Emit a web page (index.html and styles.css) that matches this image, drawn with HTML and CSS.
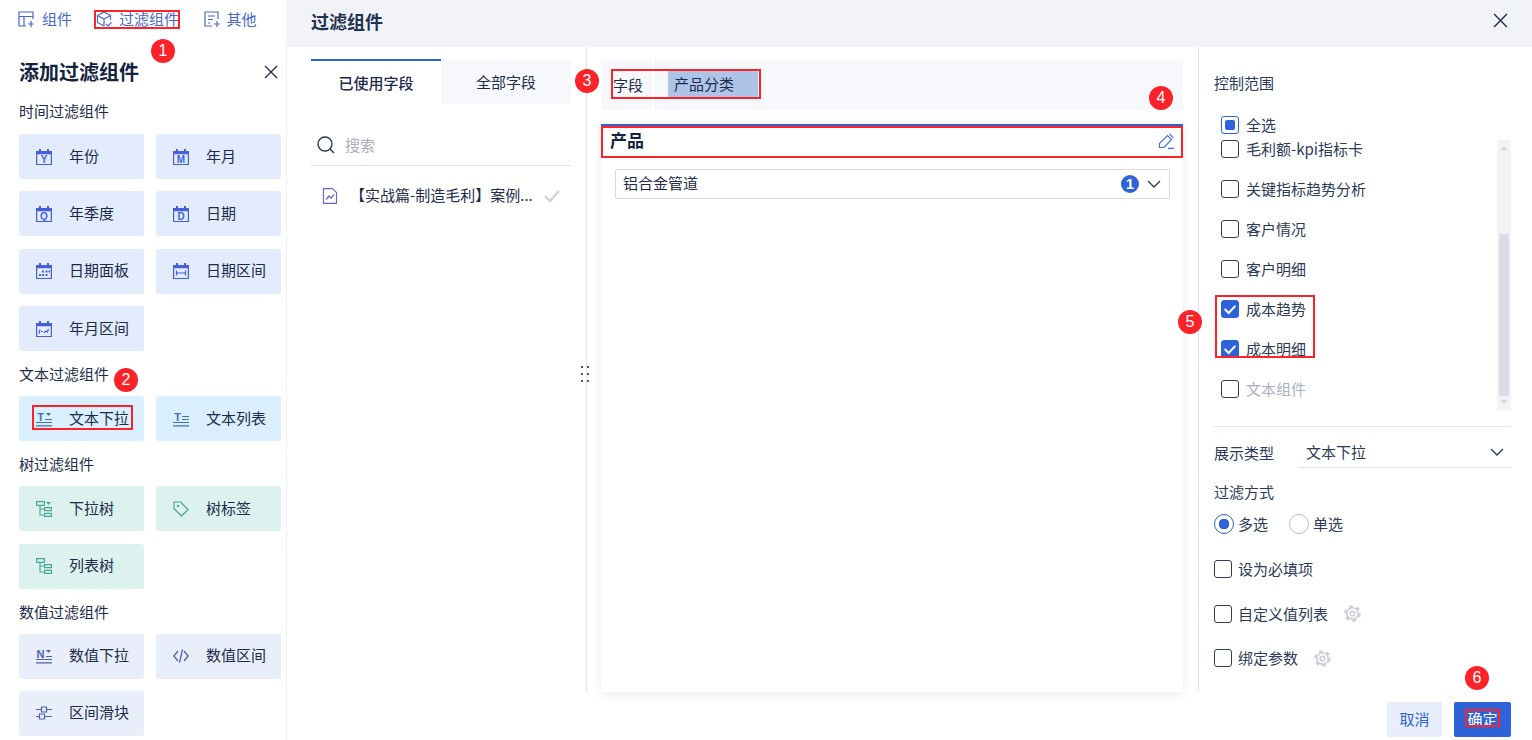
FILE: index.html
```html
<!DOCTYPE html>
<html lang="zh-CN">
<head>
  <meta charset="UTF-8" />
  <title>过滤组件</title>
  <link rel="stylesheet" href="styles.css">
</head>
<body>
  <svg class="defs" width="0" height="0">
    <symbol id="cal" viewBox="0 0 16 16">
      <path d="M.6 2.500h14.800v13H.6z" fill="none" stroke="currentColor" stroke-width="1.200"/>
      <path d="M0 2h16v3.200H0zM3 0h2v3H3zM11 0h2v3h-2z" fill="currentColor"/>
    </symbol>
    <symbol id="gear" viewBox="0 0 16 16">
      <circle cx="8" cy="8" r="5.400" fill="none" stroke="currentColor" stroke-width="1.400"/>
      <circle cx="8" cy="8" r="6.800" fill="none" stroke="currentColor" stroke-width="2" stroke-dasharray="3.500 3.620"/>
      <circle cx="8" cy="8" r="2.200" fill="none" stroke="currentColor" stroke-width="1.400"/>
    </symbol>
    <symbol id="tree" viewBox="0 0 16 16">
      <path d="M.6.600h7.800v3.800H.6zM8.600 6.600h6.800v3H8.600zM8.600 12.400h6.800v3H8.600zM4 4.400V14h4.600M4 8h4.600" fill="none" stroke="currentColor" stroke-width="1.200"/>
    </symbol>
    <symbol id="chev" viewBox="0 0 14 14">
      <path d="M1 4l6 6 6-6" fill="none" stroke="currentColor" stroke-width="1.300"/>
    </symbol>
    <symbol id="tick" viewBox="0 0 18 18">
      <path d="M3 9l4.500 4.500L15 5.500" fill="none" stroke="#fff" stroke-width="2.200"/>
    </symbol>
  </svg>

  <div class="app">
    <!-- 左侧 添加组件 -->
    <aside class="sidebar">
      <nav class="top-tabs">
        <a class="top-tab">
          <svg class="tab-icon" viewBox="0 0 16 16"><path d="M15 8V1H1v14h7M1 5.500h14M6 5.500V15M10 13h6M13 10v6" fill="none" stroke="currentColor" stroke-width="1.200"/></svg>
          组件
        </a>
        <a class="top-tab">
          <svg class="tab-icon" viewBox="0 0 16 16"><path d="M14.500 9V4.500L8 1 1.500 4.500v7L8 15M1.500 4.500L8 8l6.500-3.500M8 8v7M10 13l2 2 3.500-3.500" fill="none" stroke="currentColor" stroke-width="1.200"/></svg>
          过滤组件
        </a>
        <a class="top-tab">
          <svg class="tab-icon" viewBox="0 0 16 16"><path d="M14 8V1H1v14h7M4 5h7M4 8.500h5M4 12h2M10 13h6M13 10v6" fill="none" stroke="currentColor" stroke-width="1.200"/></svg>
          其他
        </a>
      </nav>
      <div class="side-title">
        <h2>添加过滤组件</h2>
        <svg class="close-icon" viewBox="0 0 14 14"><path d="M1 1l12 12M13 1L1 13" stroke="currentColor" stroke-width="1.300"/></svg>
      </div>

      <section class="group">
        <h3>时间过滤组件</h3>
        <div class="btn-grid time">
          <div class="comp"><svg class="ci" viewBox="0 0 16 16"><use href="#cal"/><text x="8" y="14" class="ci-letter">Y</text></svg><span>年份</span></div>
          <div class="comp"><svg class="ci" viewBox="0 0 16 16"><use href="#cal"/><text x="8" y="14" class="ci-letter">M</text></svg><span>年月</span></div>
          <div class="comp"><svg class="ci" viewBox="0 0 16 16"><use href="#cal"/><text x="8" y="14" class="ci-letter">Q</text></svg><span>年季度</span></div>
          <div class="comp"><svg class="ci" viewBox="0 0 16 16"><use href="#cal"/><text x="8" y="14" class="ci-letter">D</text></svg><span>日期</span></div>
          <div class="comp"><svg class="ci" viewBox="0 0 16 16"><use href="#cal"/><path d="M6 7.500h2V9.500H6zM9.500 7.500h2V9.500h-2zM12.500 7.500h1.500V9.500H12.500zM3 11h2v2H3zM6 11h2v2H6zM9.500 11h2v2h-2z" fill="currentColor"/></svg><span>日期面板</span></div>
          <div class="comp"><svg class="ci" viewBox="0 0 16 16"><use href="#cal"/><path d="M3.500 7.500v5M12.500 7.500v5M3.500 10h9" fill="none" stroke="currentColor" stroke-width="1.200"/></svg><span>日期区间</span></div>
          <div class="comp"><svg class="ci" viewBox="0 0 16 16"><use href="#cal"/><path d="M3 12.500l1-4M5 10.500h2M8 12l2-2 1.500 1 1-3" fill="none" stroke="currentColor" stroke-width="1.200"/></svg><span>年月区间</span></div>
        </div>
      </section>

      <section class="group">
        <h3>文本过滤组件</h3>
        <div class="btn-grid text">
          <div class="comp"><svg class="ci" viewBox="0 0 16 16"><text x="4.500" y="10" class="ci-letter big">T</text><path d="M10 2h5l-2.500 3z" fill="currentColor"/><path d="M0 11.500h16M0 14.800h16M9 8.500h7" stroke="currentColor" stroke-width="1.200" fill="none"/></svg><span>文本下拉</span></div>
          <div class="comp"><svg class="ci" viewBox="0 0 16 16"><text x="4.500" y="10" class="ci-letter big">T</text><path d="M0 11.500h16M0 14.800h16M9 5.500h7M9 8.500h7" stroke="currentColor" stroke-width="1.200" fill="none"/></svg><span>文本列表</span></div>
        </div>
      </section>

      <section class="group">
        <h3>树过滤组件</h3>
        <div class="btn-grid tree">
          <div class="comp"><svg class="ci" viewBox="0 0 16 16"><use href="#tree"/><path d="M10 1h5l-2.500 3z" fill="currentColor"/></svg><span>下拉树</span></div>
          <div class="comp"><svg class="ci" viewBox="0 0 16 16"><path d="M1 1h6.500L15 8.500 8.500 15 1 7.500z" fill="none" stroke="currentColor" stroke-width="1.200" stroke-linejoin="round"/><circle cx="5" cy="5" r="1.200" fill="currentColor"/></svg><span>树标签</span></div>
          <div class="comp"><svg class="ci" viewBox="0 0 16 16"><use href="#tree"/></svg><span>列表树</span></div>
        </div>
      </section>

      <section class="group">
        <h3>数值过滤组件</h3>
        <div class="btn-grid num">
          <div class="comp"><svg class="ci" viewBox="0 0 16 16"><text x="4.500" y="10" class="ci-letter big">N</text><path d="M10 2h5l-2.500 3z" fill="currentColor"/><path d="M0 11.500h16M0 14.800h16M10 8.500h6" stroke="currentColor" stroke-width="1.200" fill="none"/></svg><span>数值下拉</span></div>
          <div class="comp"><svg class="ci" viewBox="0 0 16 16"><path d="M5 3L.8 8 5 13M11 3l4.200 5L11 13M9.500 1.500l-3 13" fill="none" stroke="currentColor" stroke-width="1.300"/></svg><span>数值区间</span></div>
          <div class="comp"><svg class="ci" viewBox="0 0 16 16"><path d="M0 4.500h5M11 4.500h5M0 11.500h3M9 11.500h7M5.500 2h5v5h-5zM3.500 9h5v5h-5z" fill="none" stroke="currentColor" stroke-width="1.200"/></svg><span>区间滑块</span></div>
        </div>
      </section>
    </aside>

    <!-- 右侧 过滤组件设置 -->
    <main class="panel">
      <header class="panel-head">
        <h1>过滤组件</h1>
        <svg class="close-icon" viewBox="0 0 14 14"><path d="M1 1l12 12M13 1L1 13" stroke="currentColor" stroke-width="1.300"/></svg>
      </header>

      <div class="panel-body">
        <div class="col-fields">
          <div class="field-tabs">
            <div class="field-tab active">已使用字段</div>
            <div class="field-tab">全部字段</div>
          </div>
          <div class="search">
            <svg class="search-icon" viewBox="0 0 18 18"><circle cx="8" cy="8" r="7" fill="none" stroke="currentColor" stroke-width="1.400"/><path d="M13 13l4 4" stroke="currentColor" stroke-width="1.400"/></svg>
            <span>搜索</span>
          </div>
          <div class="ds-item">
            <svg class="ds-icon" viewBox="0 0 16 16"><path d="M1.500.600h9l4 4v10.800h-13zM4 11.500l3-3.500 2 2 3-3.500" fill="none" stroke="currentColor" stroke-width="1.200"/></svg>
            <span class="ds-name">【实战篇-制造毛利】案例...</span>
            <svg class="ds-check" viewBox="0 0 16 14"><path d="M1 7l5 5 9-10" fill="none" stroke="currentColor" stroke-width="2.400"/></svg>
          </div>
        </div>

        <svg class="drag-dots" viewBox="0 0 10 18"><path d="M1 1h2v2H1zM1 8h2v2H1zM1 15h2v2H1zM7 1h2v2H7zM7 8h2v2H7zM7 15h2v2H7z" fill="#4a5568"/></svg>

        <div class="col-main">
          <div class="field-bar">
            <span class="field-label">字段</span>
            <span class="field-pill">产品分类</span>
          </div>
          <div class="preview-card">
            <div class="preview-head">
              <strong>产品</strong>
              <svg class="edit-icon" viewBox="0 0 18 16"><path d="M1.500 14.500v-4l8-8 4 4-7.500 8zM11.500.8l4 4M10 15.400h6" fill="none" stroke="currentColor" stroke-width="1.200"/></svg>
            </div>
            <div class="preview-select">
              <span>铝合金管道</span>
              <span class="count">1</span>
              <svg class="chev" viewBox="0 0 14 14"><use href="#chev"/></svg>
            </div>
          </div>
        </div>

        <div class="col-props">
          <div class="prop-label">控制范围</div>
          <label class="check-row all"><i class="box part"></i>全选</label>
          <div class="scope">
            <div class="scope-list">
              <label class="check-row"><i class="box"></i>毛利额-kpi指标卡</label>
              <label class="check-row"><i class="box"></i>关键指标趋势分析</label>
              <label class="check-row"><i class="box"></i>客户情况</label>
              <label class="check-row"><i class="box"></i>客户明细</label>
              <label class="check-row"><i class="box on"><svg viewBox="0 0 18 18"><use href="#tick"/></svg></i>成本趋势</label>
              <label class="check-row"><i class="box on"><svg viewBox="0 0 18 18"><use href="#tick"/></svg></i>成本明细</label>
              <label class="check-row muted"><i class="box"></i>文本组件</label>
            </div>
            <div class="scrollbar"><i class="thumb"></i></div>
          </div>
          <div class="type-row">
            <span>展示类型</span>
            <div class="type-select">
              文本下拉
              <svg class="chev" viewBox="0 0 14 14"><use href="#chev"/></svg>
            </div>
          </div>
          <div class="prop-label filter-mode">过滤方式</div>
          <div class="radios">
            <label class="radio"><i class="dot on"></i>多选</label>
            <label class="radio"><i class="dot"></i>单选</label>
          </div>
          <label class="opt"><i class="box"></i>设为必填项</label>
          <label class="opt"><i class="box"></i>自定义值列表<svg class="gear" viewBox="0 0 16 16"><use href="#gear"/></svg></label>
          <label class="opt"><i class="box"></i>绑定参数<svg class="gear" viewBox="0 0 16 16"><use href="#gear"/></svg></label>
        </div>
      </div>

      <footer class="panel-foot">
        <button class="btn ghost">取消</button>
        <button class="btn primary">确定</button>
      </footer>
    </main>

    <!-- 标注 -->
    <div class="mark m1"></div>
    <div class="mark m2"></div>
    <div class="mark m3"></div>
    <div class="mark m4"></div>
    <div class="mark m5"></div>
    <div class="mark m6"></div>
    <span class="badge b1">1</span>
    <span class="badge b2">2</span>
    <span class="badge b3">3</span>
    <span class="badge b4">4</span>
    <span class="badge b5">5</span>
    <span class="badge b6">6</span>
  </div>
</body>
</html>
```
FILE: styles.css
```css
* {
  box-sizing: border-box;
  margin: 0;
  padding: 0;
}

body {
  font-family: "Noto Sans CJK SC", "Noto Sans", sans-serif;
  font-size: 15px;
  line-height: 20px;
  color: #1c2b4a;
  background: #fff;
  overflow: hidden;
}

i {
  font-style: normal;
}

.defs {
  position: absolute;
}

.app {
  position: relative;
  display: flex;
  width: 1532px;
  height: 740px;
  overflow: hidden;
}

/* 左侧 */
.sidebar {
  width: 287px;
  flex: none;
  padding-left: 19px;
  border-right: 1px solid #eef0f5;
}

.top-tabs {
  display: flex;
  height: 38px;
  align-items: center;
  margin-left: -1px;
}

.top-tab {
  display: flex;
  align-items: center;
  gap: 7px;
  margin-right: 24.500px;
  color: #4a66c8;
}

.top-tab:first-child {
  gap: 8px;
  margin-right: 24px;
}

.tab-icon {
  width: 16px;
  height: 16px;
}

.side-title {
  display: flex;
  align-items: center;
  justify-content: space-between;
  height: 64px;
  padding: 4px 8px 0 0;
}

.side-title h2 {
  font-size: 20px;
  font-weight: 700;
  color: #14233f;
}

.close-icon {
  width: 14px;
  height: 14px;
  color: #1c2b4a;
}

.group {
  margin-bottom: 13px;
}

.group h3 {
  font-size: 15px;
  font-weight: 400;
  line-height: 18px;
  margin-bottom: 14px;
}

.group + .group h3 {
  line-height: 20px;
  margin-bottom: 12px;
}

.btn-grid {
  display: grid;
  grid-template-columns: 125px 125px;
  column-gap: 12px;
  row-gap: 12.400px;
}

.comp {
  display: flex;
  align-items: center;
  height: 45px;
  padding-left: 17px;
  border-radius: 3px;
}

.comp span {
  margin-left: 17px;
  padding-bottom: 2px;
}

.ci {
  width: 16px;
  height: 16px;
  flex: none;
}

.ci-letter {
  font-family: "Liberation Sans", sans-serif;
  font-size: 10px;
  font-weight: 700;
  text-anchor: middle;
  fill: currentColor;
}

.ci-letter.big {
  font-size: 11px;
}

.time .comp {
  background: #e3ecfd;
}

.time .ci {
  color: #4560d8;
}

.text .comp {
  background: #daf0fe;
}

.text .ci {
  color: #3f6fb5;
}

.tree .comp {
  background: #dcf2ee;
}

.tree .ci {
  color: #4aa69a;
}

.num .comp {
  background: #e9eefb;
}

.num .ci {
  color: #4d62ad;
}

/* 右侧 */
.panel {
  flex: 1;
  display: flex;
  flex-direction: column;
  min-width: 0;
}

.panel-head {
  display: flex;
  align-items: center;
  justify-content: space-between;
  height: 47px;
  padding: 0 24px 6px 24px;
  background: #f1f3f8;
}

.panel-head h1 {
  font-size: 18px;
  font-weight: 700;
  color: #22324f;
}

.panel-head .close-icon {
  width: 15px;
  height: 15px;
}

.panel-body {
  position: relative;
  display: flex;
  height: 645px;
}

.col-fields {
  width: 300px;
  flex: none;
  padding: 12px 15px 0 24px;
  border-right: 1px solid #e4e6ef;
}

.field-tabs {
  display: flex;
  height: 45px;
}

.field-tab {
  width: 130px;
  display: flex;
  align-items: center;
  justify-content: center;
  background: #f7f8fc;
}

.field-tab.active {
  background: #fff;
  border-top: 2px solid #2d62d8;
  font-weight: 500;
}

.search {
  display: flex;
  align-items: center;
  gap: 10px;
  height: 41px;
  margin-top: 21px;
  padding: 0 0 0 6px;
  border-bottom: 1px solid #dcdfe8;
  color: #a9aeb9;
}

.search-icon {
  width: 18px;
  height: 18px;
  color: #2b3a55;
}

.ds-item {
  display: flex;
  align-items: center;
  height: 32px;
  margin-top: 14px;
  padding-left: 11px;
}

.ds-icon {
  width: 16px;
  height: 16px;
  flex: none;
  color: #7a5fd0;
}

.ds-name {
  width: 183px;
  margin-left: 12px;
  white-space: nowrap;
  padding-bottom: 2px;
}

.ds-check {
  width: 16px;
  height: 14px;
  margin-left: 11px;
  color: #d0d3da;
}

.drag-dots {
  position: absolute;
  left: 293px;
  top: 318px;
  width: 10px;
  height: 18px;
}

.col-main {
  width: 612px;
  flex: none;
  padding: 12px 15px 0 14px;
  border-right: 1px solid #e4e6ef;
  display: flex;
  flex-direction: column;
}

.field-bar {
  display: flex;
  align-items: center;
  height: 51px;
  padding-left: 12px;
  background: #f7f8fc;
}

.field-label {
  width: 41px;
  height: 51px;
  line-height: 51px;
  margin-right: 2px;
  flex: none;
  border-right: 2px solid #fff;
}

.field-pill {
  width: 90px;
  height: 29px;
  margin-left: 12px;
  padding-left: 6px;
  line-height: 28px;
  background: #aec4e6;
  border-radius: 2px 2px 4px 4px;
}

.preview-card {
  flex: 1;
  margin-top: 14px;
  background: #fff;
  border-top: 2px solid #2d62d8;
  box-shadow: 0 2px 10px rgba(40, 60, 110, 0.1);
}

.preview-head {
  display: flex;
  align-items: center;
  justify-content: space-between;
  height: 32px;
  padding: 0 7px 5px 9px;
}

.preview-head strong {
  font-size: 17px;
  font-weight: 700;
  color: #14233f;
}

.edit-icon {
  width: 18px;
  height: 16px;
  margin-top: 3px;
  color: #3f6fe0;
}

.preview-select {
  display: flex;
  align-items: center;
  height: 30px;
  margin: 11px 13px 0 14px;
  padding: 0 7px 2px 7px;
  border: 1px solid #d9dce5;
  border-radius: 2px;
}

.preview-select span:first-child {
  flex: 1;
}

.count {
  width: 18px;
  height: 18px;
  margin-top: 2px;
  border-radius: 50%;
  background: #2d62d8;
  color: #fff;
  font-family: "Liberation Sans", sans-serif;
  font-size: 15px;
  font-weight: 700;
  line-height: 18px;
  text-align: center;
}

.chev {
  width: 14px;
  height: 14px;
  color: #2b3a55;
}

.preview-select .chev {
  margin: 2px 1px 0 8px;
}

.col-props {
  width: 333px;
  flex: none;
  padding: 26px 21px 0 15px;
}

.prop-label {
  height: 20px;
  color: #2b3a55;
}

.box {
  display: inline-block;
  width: 18px;
  height: 18px;
  flex: none;
  border: 1px solid #2f3d58;
  border-radius: 3px;
  background: #fff;
}

.box.on {
  background: #2d62d8;
  border-color: #2d62d8;
}

.box.on svg {
  display: block;
  width: 16px;
  height: 16px;
}

.box.part {
  border-color: #2d62d8;
  padding: 3px;
}

.box.part::before {
  content: "";
  display: block;
  width: 10px;
  height: 10px;
  background: #2d62d8;
  border-radius: 2px;
}

.check-row {
  display: flex;
  align-items: center;
  gap: 7px;
  height: 18px;
  padding-left: 7px;
  color: #2b3a55;
}

.check-row.all {
  margin-top: 23px;
}

.check-row.muted {
  color: #a9b0bf;
}

.scope {
  display: flex;
  justify-content: space-between;
  height: 270px;
  margin-top: 6px;
}

.scope-list {
  display: flex;
  flex-direction: column;
  gap: 22px;
}

.scrollbar {
  position: relative;
  width: 14px;
  background: #f2f3f6;
}

.scrollbar::before,
.scrollbar::after {
  content: "";
  position: absolute;
  left: 3px;
  border-left: 4px solid transparent;
  border-right: 4px solid transparent;
}

.scrollbar::before {
  top: 6px;
  border-bottom: 4px solid #d5d8df;
}

.scrollbar::after {
  bottom: 6px;
  border-top: 4px solid #d5d8df;
}

.thumb {
  position: absolute;
  left: 2px;
  top: 94px;
  width: 10px;
  height: 162px;
  background: #d9dce2;
}

.type-row {
  display: flex;
  align-items: center;
  margin-top: 16px;
  padding-top: 10px;
  border-top: 1px solid #e4e6ef;
  color: #2b3a55;
}

.type-row > span {
  width: 85px;
  padding-top: 1px;
}

.type-select {
  flex: 1;
  display: flex;
  align-items: center;
  justify-content: space-between;
  height: 31px;
  padding: 0 7px;
  border-bottom: 1px solid #dfe2ec;
}

.filter-mode {
  margin-top: 14px;
}

.radios {
  display: flex;
  gap: 21px;
  margin-top: 12px;
}

.radio {
  display: flex;
  align-items: center;
  gap: 4px;
  height: 20px;
  color: #2b3a55;
}

.dot {
  width: 20px;
  height: 20px;
  border: 1px solid #b6bccb;
  border-radius: 50%;
}

.dot.on {
  border-color: #2d62d8;
  background: radial-gradient(circle, #2d62d8 0 5px, #fff 5.500px);
}

.opt {
  display: flex;
  align-items: center;
  height: 18px;
  margin-top: 26.500px;
  color: #2b3a55;
}

.radios + .opt {
  margin-top: 26px;
}

.opt .box {
  margin-right: 6px;
}

.gear {
  width: 17px;
  height: 17px;
  margin-left: 16px;
  color: #c9ccd4;
}

.panel-foot {
  display: flex;
  justify-content: flex-end;
  gap: 12px;
  padding: 10px 21px 0 0;
}

.btn {
  height: 35px;
  padding-bottom: 2px;
  border: none;
  border-radius: 2px;
  font: inherit;
}

.ghost {
  width: 55px;
  background: #e8eefb;
  color: #2d62d8;
}

.primary {
  width: 57px;
  background: #2d62d8;
  color: #fff;
}

/* 标注 */
.mark {
  position: absolute;
  border: 2px solid #fb2229;
}

.m1 { left: 94px; top: 10px; width: 86px; height: 19px; }
.m2 { left: 32px; top: 405px; width: 101px; height: 25px; }
.m3 { left: 611px; top: 69px; width: 150px; height: 30px; }
.m4 { left: 601px; top: 126px; width: 582px; height: 32px; }
.m5 { left: 1215px; top: 295px; width: 100px; height: 63px; }
.m6 { left: 1465px; top: 709px; width: 35px; height: 18px; }

.badge {
  position: absolute;
  width: 24px;
  height: 24px;
  border-radius: 50%;
  background: #fb2229;
  color: #fff;
  font-family: "Liberation Sans", sans-serif;
  font-size: 16px;
  line-height: 24px;
  text-align: center;
}

.b1 { left: 151px; top: 39px; }
.b2 { left: 114px; top: 368px; }
.b3 { left: 575px; top: 69px; }
.b4 { left: 1149px; top: 86px; }
.b5 { left: 1178px; top: 310px; }
.b6 { left: 1465px; top: 666px; }
```
